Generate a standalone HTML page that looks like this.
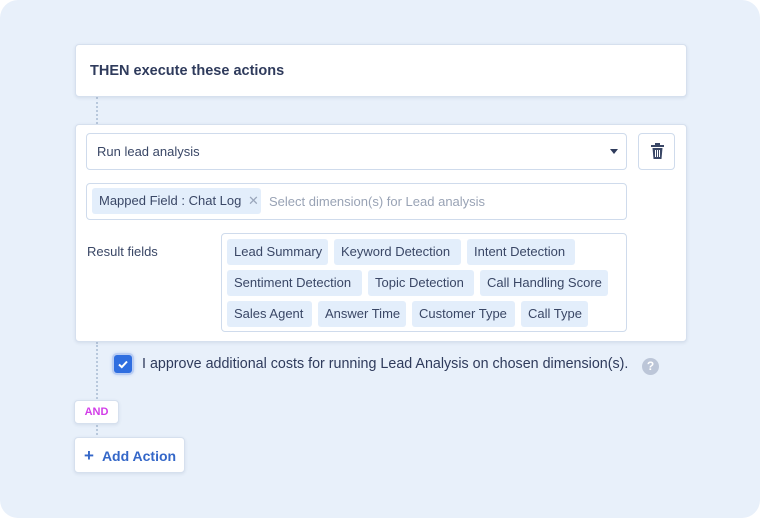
<!DOCTYPE html>
<html><head><style>
*{box-sizing:border-box;margin:0;padding:0}
html,body{width:760px;height:518px;background:#fff;overflow:hidden}
body{font-family:"Liberation Sans",Arial,sans-serif;color:#3a4766;position:relative}
.bg{position:absolute;left:0;top:0;width:760px;height:518px;background:#e8f0fa;border-radius:18px}
.a{position:absolute}
.card{background:#fff;border:1px solid #d6e0ee;border-radius:4px;box-shadow:0 1px 3px rgba(60,80,120,.12)}
.box{background:#fff;border:1px solid #cfdbec;border-radius:4px}
.chip{position:absolute;height:26px;background:#e3eefb;border-radius:3px;font-size:13px;line-height:26px;padding-left:7px;color:#3a4766;white-space:nowrap}
.dot{position:absolute;left:96px;border-left:2px dotted #b8c8dc;width:0}
</style></head><body>
<div class="bg"></div>
<div class="dot" style="top:97px;height:27px"></div>
<div class="dot" style="top:342px;height:100px"></div>
<div class="a card" style="left:75px;top:44px;width:612px;height:53px"><div style="position:absolute;left:14px;top:18px;font-size:14.5px;font-weight:bold;color:#2f3b5c">THEN execute these actions</div></div>
<div class="a card" style="left:75px;top:124px;width:612px;height:218px"></div>
<div class="a box" style="left:86px;top:133px;width:541px;height:37px"><div style="position:absolute;left:10px;top:10px;font-size:13px">Run lead analysis</div>
<div style="position:absolute;right:8px;top:15px;width:0;height:0;border-left:4.5px solid transparent;border-right:4.5px solid transparent;border-top:5px solid #2f3b5c"></div></div>
<div class="a box" style="left:638px;top:133px;width:37px;height:37px">
<svg style="position:absolute;left:12px;top:9px" width="13" height="16" viewBox="0 0 13 16"><rect x="0" y="2" width="13" height="2" fill="#3a4766"/><rect x="4" y="0" width="5" height="2" fill="#3a4766"/><path d="M1.5 5h10l-1 11h-8z" fill="#3a4766"/><rect x="4" y="7" width="1" height="7" fill="#fff"/><rect x="6" y="7" width="1" height="7" fill="#fff"/><rect x="8" y="7" width="1" height="7" fill="#fff"/></svg></div>
<div class="a box" style="left:86px;top:183px;width:541px;height:37px"></div>
<div class="chip" style="left:92px;top:188px;width:169px">Mapped Field : Chat Log <span style="color:#9aa6bb;margin-left:3px">✕</span></div>
<div class="a" style="left:269px;top:194px;font-size:13px;color:#99a3b5">Select dimension(s) for Lead analysis</div>
<div class="a" style="left:87px;top:244px;font-size:13px">Result fields</div>
<div class="a box" style="left:221px;top:233px;width:406px;height:99px"></div>
<div class="chip" style="left:227px;top:239px;width:101px">Lead Summary</div>
<div class="chip" style="left:334px;top:239px;width:127px">Keyword Detection</div>
<div class="chip" style="left:467px;top:239px;width:108px">Intent Detection</div>
<div class="chip" style="left:227px;top:270px;width:135px">Sentiment Detection</div>
<div class="chip" style="left:368px;top:270px;width:106px">Topic Detection</div>
<div class="chip" style="left:480px;top:270px;width:128px">Call Handling Score</div>
<div class="chip" style="left:227px;top:301px;width:85px">Sales Agent</div>
<div class="chip" style="left:318px;top:301px;width:88px">Answer Time</div>
<div class="chip" style="left:412px;top:301px;width:103px">Customer Type</div>
<div class="chip" style="left:521px;top:301px;width:67px">Call Type</div>
<div class="a" style="left:114px;top:355px;width:18px;height:18px;background:#2f6ee0;border-radius:3px;box-shadow:0 0 0 2px #b9cdf3,0 0 5px #6f96e8">
<svg width="18" height="18" viewBox="0 0 18 18"><path d="M5 9.5l2.8 2.6L13 6.5" stroke="#fff" stroke-width="2" fill="none"/></svg></div>
<div class="a" style="left:142px;top:356px;font-size:14.3px;color:#2f3b5c">I approve additional costs for running Lead Analysis on chosen dimension(s).</div>
<div class="a" style="left:642px;top:358px;width:17px;height:17px;border-radius:50%;background:#bcc6d8;color:#fff;font-size:12px;font-weight:bold;text-align:center;line-height:17px">?</div>
<div class="a card" style="left:74px;top:400px;width:45px;height:24px;font-size:11px;font-weight:bold;color:#d23ce8;text-align:center;line-height:23px">AND</div>
<div class="a card" style="left:74px;top:437px;width:111px;height:36px;font-size:14px;font-weight:bold;color:#3467c8;line-height:35px;padding-left:9px"><span style="font-size:17px;margin-right:8px">+</span>Add Action</div>
</body></html>
